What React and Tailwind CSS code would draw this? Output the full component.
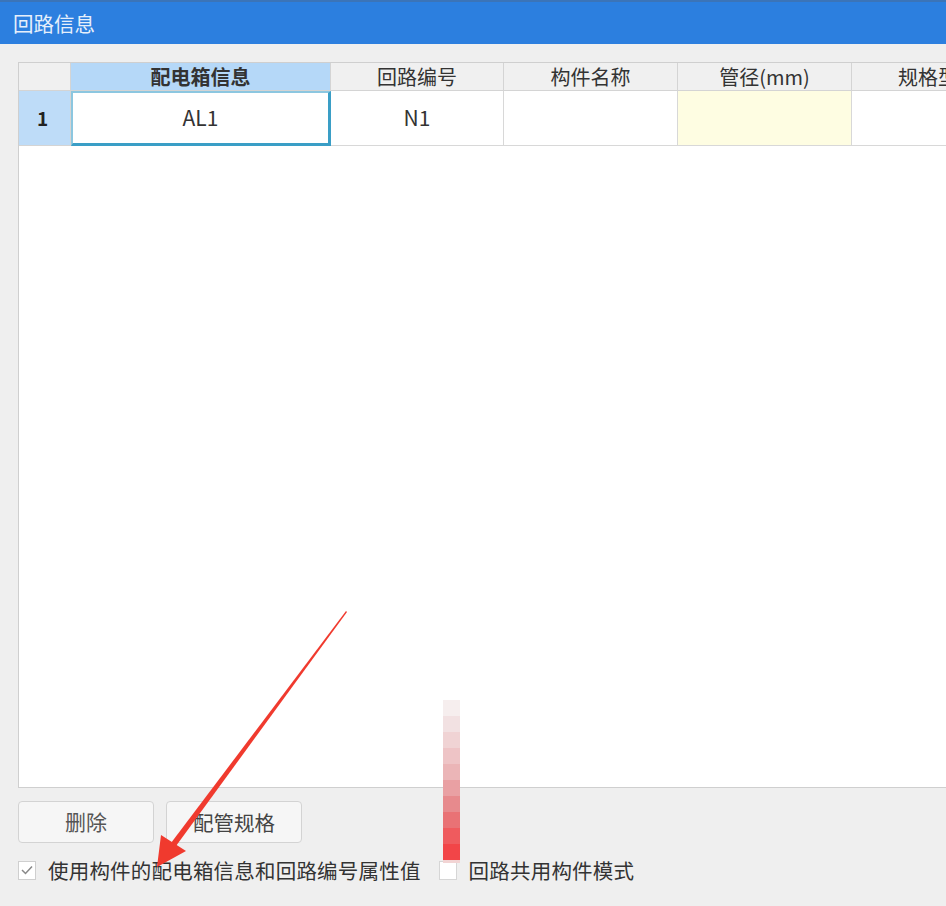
import React from "react";

const font = { fontFamily: '"Noto Sans CJK SC", "Noto Sans", sans-serif' };

function Arrow() {
  return (
    <svg className="absolute left-0 top-0 pointer-events-none" width="946" height="906" viewBox="0 0 946 906">
      <polygon points="346,611 347,612 176,846 171,843" fill="#f03a2e" />
      <polygon points="157,867 161,835 186,851" fill="#f03a2e" />
      {[
        [700, "#f6eeee"],
        [716, "#f2e1e2"],
        [732, "#f0d3d4"],
        [748, "#eec4c6"],
        [764, "#ebb5b7"],
        [780, "#e9a0a3"],
        [796, "#e78a8d"],
        [812, "#e97275"],
        [828, "#ef5b5e"],
        [844, "#f24548"],
      ].map(([y, c]) => (
        <rect key={y} x="443" y={y} width="17" height="16" fill={c} />
      ))}
      <rect x="443" y="860" width="17" height="3" fill="#f2d4d4" />
    </svg>
  );
}

function HeaderCell({ children, className = "" }) {
  return (
    <div
      className={`flex items-center justify-center border-r border-b border-[#d4d4d4] text-[20px] leading-none text-[#333] ${className}`}
    >
      {children}
    </div>
  );
}

export default function App() {
  return (
    <div className="relative w-[946px] h-[906px] overflow-hidden bg-[#efefef] flex flex-col" style={font}>
      <div className="h-[44px] bg-[#2c7fdf] border-t-2 border-[#3b74b8] flex items-center pl-[13px] text-[20.5px] text-[#e6effb] shrink-0">
        回路信息
      </div>
      <div className="flex-1 flex flex-col pl-[18px] pt-[18px]">
        <div className="h-[726px] bg-white border-l border-t border-b border-[#cfcfcf] flex flex-col">
          <div className="flex h-[28px] bg-[#f0f0f0]">
            <HeaderCell className="w-[52px] shrink-0">{""}</HeaderCell>
            <HeaderCell className="w-[260px] shrink-0 bg-[#b5d8f8] font-bold text-[#222]">配电箱信息</HeaderCell>
            <HeaderCell className="w-[173px] shrink-0">回路编号</HeaderCell>
            <HeaderCell className="w-[174px] shrink-0">构件名称</HeaderCell>
            <HeaderCell className="w-[174px] shrink-0">管径(mm)</HeaderCell>
            <HeaderCell className="w-[174px] shrink-0 justify-start pl-[46px]">规格型号</HeaderCell>
          </div>
          <div className="flex h-[55px]">
            <div className="w-[52px] shrink-0 bg-[#bedcf8] border-r border-b border-[#d4d4d4] flex items-center pl-[18px] text-[19px] font-bold text-[#222]">
              1
            </div>
            <div className="w-[260px] shrink-0 border-2 border-[#3a9ec6] border-t-[#8cc7e0] border-l-[#8cc7e0] border-b-[3px] border-r-[3px] flex items-center justify-center text-[21px] text-[#333]">
              AL1
            </div>
            <div className="w-[173px] shrink-0 border-r border-b border-[#d8d8d8] flex items-center justify-center text-[21px] text-[#333]">
              N1
            </div>
            <div className="w-[174px] shrink-0 border-r border-b border-[#d8d8d8]" />
            <div className="w-[174px] shrink-0 border-r border-b border-[#d8d8d8] bg-[#fefde2]" />
            <div className="w-[174px] shrink-0 border-b border-[#d8d8d8]" />
          </div>
        </div>
        <div className="flex gap-[12px] mt-[13px]">
          <button className="w-[136px] h-[42px] rounded-[4px] border border-[#d3d3d3] bg-[#f6f6f6] text-[21px] text-[#555]">
            删除
          </button>
          <button className="w-[136px] h-[42px] rounded-[4px] border border-[#d3d3d3] bg-[#f6f6f6] text-[20.5px] text-[#444]">
            配管规格
          </button>
        </div>
        <div className="flex items-center mt-[17px] text-[20.5px] leading-none text-[#333]">
          <div className="w-[18px] h-[19px] border border-[#cfcfcf] bg-white flex items-center justify-center">
            <svg width="12" height="10" viewBox="0 0 12 10">
              <path d="M1 5 L4.5 8.5 L11 1.5" fill="none" stroke="#888" strokeWidth="1.5" />
            </svg>
          </div>
          <span className="ml-[12px] tracking-[0.2px]">使用构件的配电箱信息和回路编号属性值</span>
          <div className="ml-[18px] w-[18px] h-[19px] border border-[#d6d6d6] bg-white" />
          <span className="ml-[12px] tracking-[0.2px]">回路共用构件模式</span>
        </div>
      </div>
      <Arrow />
    </div>
  );
}
